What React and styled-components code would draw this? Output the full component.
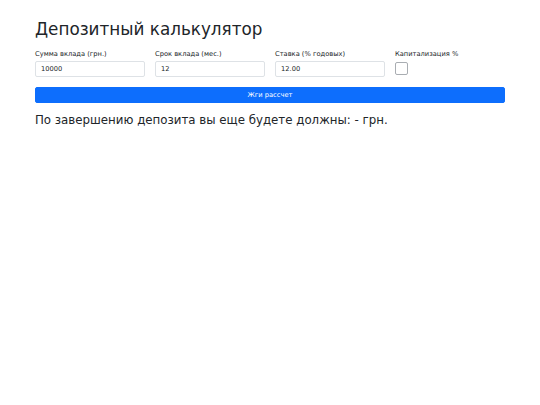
import React from "react";
import styled, { createGlobalStyle } from "styled-components";

const Global = createGlobalStyle`
  html, body { margin: 0; padding: 0; background: #fff; }
  body { font-family: "DejaVu Sans", "Noto Sans", sans-serif; color: #212529; }
  * { box-sizing: border-box; }
`;

const Container = styled.div`
  width: 470px;
  margin: 0 auto;
  padding-top: 19px;
`;

const Title = styled.h1`
  font-size: 16.8px;
  font-weight: 400;
  line-height: 20px;
  margin: 0 0 10px 0;
`;

const Row = styled.div`
  display: grid;
  grid-template-columns: repeat(4, 1fr);
  column-gap: 10px;
`;

const Field = styled.div`
  display: flex;
  flex-direction: column;
  align-items: flex-start;
`;

const Label = styled.label`
  font-size: 6.7px;
  line-height: 11px;
  margin-bottom: 1px;
`;

const Input = styled.input`
  width: 100%;
  height: 16px;
  padding: 2px 5px;
  font-family: inherit;
  font-size: 6.7px;
  line-height: 10px;
  color: #212529;
  border: 1px solid #dee2e6;
  border-radius: 2px;
  background: #fff;
  outline: none;
`;

const Check = styled.span`
  display: block;
  width: 13px;
  height: 13px;
  margin-top: 1px;
  border: 1px solid #a9adb2;
  border-radius: 2px;
  background: #fff;
`;

const Button = styled.button`
  display: block;
  width: 100%;
  height: 16px;
  margin-top: 10px;
  padding: 0;
  border: 1px solid #0d6efd;
  border-radius: 2px;
  background: #0d6efd;
  color: #fff;
  font-family: inherit;
  font-size: 6.7px;
  line-height: 10px;
`;

const Result = styled.h3`
  font-size: 11.8px;
  font-weight: 400;
  line-height: 14px;
  margin: 10px 0 0 0;
`;

export default function App() {
  return (
    <>
      <Global />
      <Container>
        <Title>Депозитный калькулятор</Title>
        <Row>
          <Field>
            <Label>Сумма вклада (грн.)</Label>
            <Input defaultValue="10000" />
          </Field>
          <Field>
            <Label>Срок вклада (мес.)</Label>
            <Input defaultValue="12" />
          </Field>
          <Field>
            <Label>Ставка (% годовых)</Label>
            <Input defaultValue="12.00" />
          </Field>
          <Field>
            <Label>Капитализация %</Label>
            <Check />
          </Field>
        </Row>
        <Button>Жги рассчет</Button>
        <Result>По завершению депозита вы еще будете должны: - грн.</Result>
      </Container>
    </>
  );
}
